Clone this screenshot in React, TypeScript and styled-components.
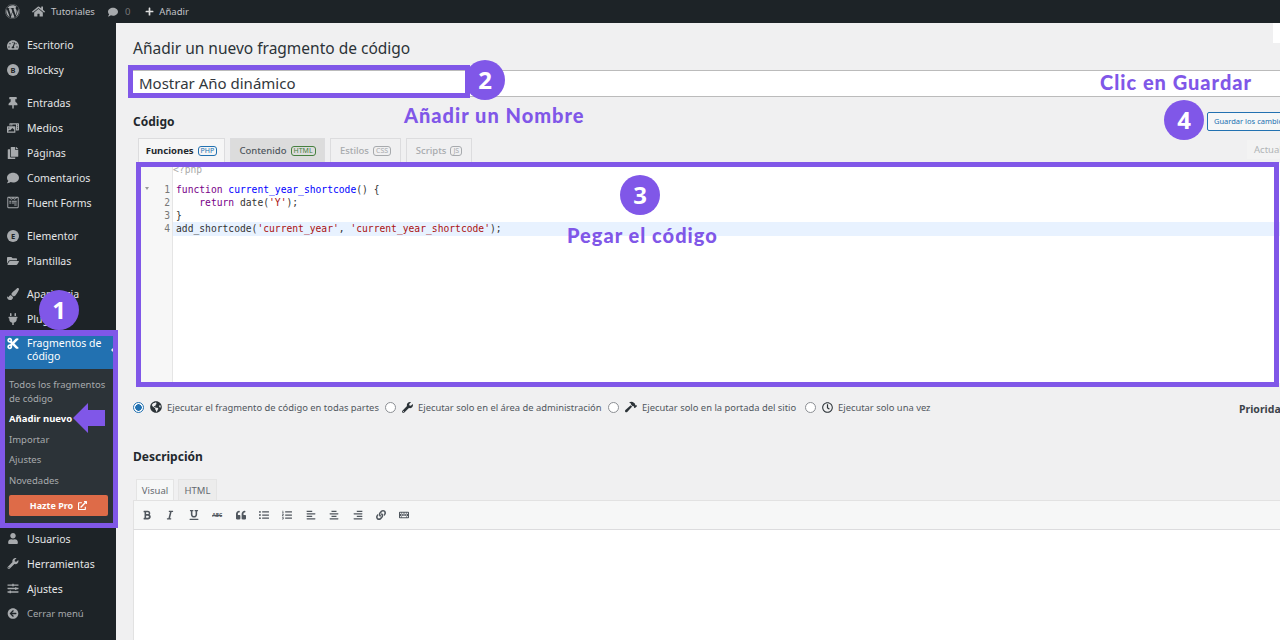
import styled, { createGlobalStyle } from 'styled-components';
import type { ReactNode } from 'react';
import {
  FaWordpress, FaHome, FaComment, FaPlus, FaTachometerAlt, FaThumbtack, FaPhotoVideo, FaCopy,
  FaFolderOpen, FaPaintBrush, FaPlug, FaCut, FaUser, FaWrench, FaSlidersH, FaArrowCircleLeft,
  FaExternalLinkAlt, FaGlobeAmericas, FaBold, FaItalic, FaUnderline, FaQuoteLeft, FaListUl,
  FaListOl, FaAlignLeft, FaAlignCenter, FaAlignRight, FaLink, FaKeyboard, FaHammer, FaRegClock,
  FaWpforms,
} from 'react-icons/fa';

const PURPLE = '#8057e8';
const UI_FONT = '"Noto Sans", "Open Sans", sans-serif';

const GlobalStyle = createGlobalStyle`
  html, body { margin: 0; padding: 0; width: 1280px; height: 640px; overflow: hidden; background: #f0f0f1; }
  * { box-sizing: border-box; }
  body { font-family: ${UI_FONT}; color: #3c434a; }
`;

const Page = styled.div`
  position: relative;
  width: 1280px;
  height: 640px;
  overflow: hidden;
  display: flex;
  flex-direction: column;
`;

const AdminBar = styled.div`
  height: 23px;
  flex: none;
  background: #1d2327;
  color: #c3c4c7;
  display: flex;
  align-items: center;
  padding-left: 5px;
  font-size: 9.5px;
`;

const BarItem = styled.div<{ $gap?: number; $left?: number }>`
  display: flex;
  align-items: center;
  gap: ${({ $gap }) => $gap ?? 6}px;
  margin-left: ${({ $left }) => $left ?? 0}px;
  svg { color: #a7aaad; }
`;

const Body = styled.div`
  flex: 1;
  display: flex;
  min-height: 0;
`;

const Sidebar = styled.nav`
  width: 116px;
  flex: none;
  background: #1d2327;
  padding-top: 9px;
`;

const MenuGroup = styled.div`
  margin-bottom: 8px;
`;

const MenuItem = styled.div<{ $small?: boolean }>`
  height: 25px;
  display: flex;
  align-items: center;
  padding-left: 7px;
  gap: 8px;
  color: ${({ $small }) => ($small ? '#a7aaad' : '#e4e5e6')};
  font-size: ${({ $small }) => ($small ? 9.5 : 10.5)}px;
  svg { color: #a7aaad; flex: none; width: 12px; }
`;

const ActiveItem = styled.div`
  height: 38px;
  background: #2271b1;
  color: #fff;
  display: flex;
  gap: 8px;
  padding: 6px 0 0 7px;
  font-size: 10.5px;
  line-height: 13px;
  position: relative;
  svg { flex: none; width: 12px; margin-top: 0; }
`;

const ActiveNotch = styled.span`
  position: absolute;
  right: 0;
  top: 14px;
  border: 5px solid transparent;
  border-right-color: #f0f0f1;
  border-left-width: 0;
`;

const SubMenu = styled.div`
  height: 157px;
  background: #2c3338;
  padding: 9px 9px 0;
  font-size: 9.5px;
  color: #a7aaad;
`;

const SubItem = styled.div<{ $current?: boolean }>`
  line-height: 13.5px;
  margin-bottom: ${({ $current }) => ($current ? 7 : 7)}px;
  color: ${({ $current }) => ($current ? '#fff' : '#a7aaad')};
  font-weight: ${({ $current }) => ($current ? 700 : 400)};
`;

const ProButton = styled.div`
  width: 99px;
  height: 21px;
  margin-top: 8px;
  border-radius: 2px;
  background: #de6b48;
  color: #fff;
  font-size: 9px;
  font-weight: 700;
  display: flex;
  align-items: center;
  justify-content: center;
  gap: 5px;
`;

const Main = styled.main`
  flex: 1;
  min-width: 0;
  padding: 14px 0 0 17px;
  position: relative;
`;

const ScreenOptions = styled.div`
  position: absolute;
  top: 0;
  right: 0;
  width: 7px;
  height: 20px;
  background: #fff;
`;

const Heading = styled.h1`
  margin: 0;
  font-size: 15.5px;
  line-height: 22px;
  font-weight: 400;
  color: #2c3338;
`;

const TitleInput = styled.div`
  height: 27px;
  margin: 11px 0 0 -4px;
  background: #fff;
  border-top: 1px solid #bbb;
  border-bottom: 1px solid #bbb;
  padding-left: 10px;
  font-size: 15px;
  line-height: 25px;
  color: #32373c;
`;

const CodeHeader = styled.div`
  height: 33px;
  display: flex;
  align-items: center;
  justify-content: space-between;
  margin-top: 8px;
`;

const SectionTitle = styled.h2`
  margin: 0;
  font-size: 12px;
  font-weight: 700;
  color: #23282d;
`;

const SaveButton = styled.div`
  width: 100px;
  margin-right: -27px;
  height: 19px;
  flex: none;
  border: 1px solid #2271b1;
  border-radius: 2px;
  background: #f6f7f7;
  color: #2271b1;
  font-size: 7.5px;
  line-height: 17px;
  padding-left: 6px;
  white-space: nowrap;
  overflow: hidden;
`;

const CodeTabs = styled.div`
  display: flex;
  align-items: flex-end;
  height: 24px;
  margin-top: 0;
  padding-left: 5px;
  gap: 5px;
  position: relative;
`;

const CodeTab = styled.div<{ $w: number; $state: 'on' | 'mid' | 'off' }>`
  width: ${({ $w }) => $w}px;
  height: 24px;
  border: 1px solid #dcdcde;
  border-bottom: 0;
  display: flex;
  align-items: center;
  justify-content: center;
  gap: 4px;
  font-size: 9.5px;
  font-weight: ${({ $state }) => ($state === 'on' ? 700 : 500)};
  background: ${({ $state }) => ($state === 'on' ? '#f6f6f6' : $state === 'mid' ? '#dcdcdc' : '#f0f0f1')};
  color: ${({ $state }) => ($state === 'on' ? '#23282d' : $state === 'mid' ? '#50575e' : '#a7aaad')};
`;

const Badge = styled.span<{ $color: string }>`
  font-size: 7px;
  line-height: 8px;
  padding: 0 2px;
  border: 1px solid ${({ $color }) => $color};
  border-radius: 3px;
  color: ${({ $color }) => $color};
  font-weight: 400;
`;

const UpdateTab = styled.div`
  position: absolute;
  right: 0;
  top: 2px;
  width: 33px;
  height: 19px;
  background: #f3f3f3;
  color: #b0b3b6;
  font-size: 9.5px;
  line-height: 19px;
  padding-left: 7px;
  overflow: hidden;
`;

const Editor = styled.div`
  height: 220px;
  margin: 1px 0 0 8px;
  background: #fff;
  display: flex;
  font-family: "DejaVu Sans Mono", monospace;
  font-size: 9.67px;
  line-height: 13.3px;
`;

const Gutter = styled.div`
  width: 32px;
  flex: none;
  background: #f7f7f7;
  border-right: 1px solid #e5e5e5;
  padding-top: 19.5px;
  color: #777;
  position: relative;
`;

const GutterNum = styled.div`
  text-align: right;
  padding-right: 2px;
`;

const FoldMark = styled.span`
  position: absolute;
  left: 4px;
  top: 24px;
  border: 2.5px solid transparent;
  border-top: 3px solid #999;
  border-bottom: 0;
`;

const CodeArea = styled.div`
  flex: 1;
  min-width: 0;
  color: #333;
  white-space: pre;
`;

const PhpTag = styled.div`
  color: #aaa;
  height: 19.5px;
  padding-left: 0;
`;

const CodeLine = styled.div<{ $active?: boolean }>`
  height: 13.3px;
  padding-left: 3px;
  background: ${({ $active }) => ($active ? '#e8f2ff' : 'transparent')};
`;

const Kw = styled.span`color: #708;`;
const Fn = styled.span`color: #00f;`;
const Str = styled.span`color: #a11;`;

const RunRow = styled.div`
  display: flex;
  align-items: center;
  height: 20px;
  margin-top: 14px;
  padding-left: 0;
  font-size: 9.4px;
  color: #50575e;
  position: relative;
`;

const RunOption = styled.div<{ $width: number }>`
  width: ${({ $width }) => $width}px;
  display: flex;
  align-items: center;
  gap: 5px;
  flex: none;
  white-space: nowrap;
  svg { color: #2c3338; flex: none; }
`;

const Radio = styled.span<{ $on?: boolean }>`
  width: 11px;
  height: 11px;
  border-radius: 50%;
  flex: none;
  margin-right: 1px;
  border: 1px solid ${({ $on }) => ($on ? '#2271b1' : '#8c8f94')};
  background: ${({ $on }) => ($on ? 'radial-gradient(circle, #2271b1 0 3px, #fff 3.5px)' : '#fff')};
`;

const Priority = styled.div`
  position: absolute;
  right: 0;
  top: 5px;
  width: 41px;
  overflow: hidden;
  font-size: 10.5px;
  font-weight: 700;
  color: #3c434a;
`;

const DescTitle = styled(SectionTitle)`
  margin-top: 30px;
  line-height: 20px;
`;

const VisualTabs = styled.div`
  display: flex;
  gap: 4px;
  margin: 12px 0 0 3px;
  height: 21px;
`;

const VisualTab = styled.div<{ $on?: boolean; $w: number }>`
  width: ${({ $w }) => $w}px;
  display: flex;
  align-items: center;
  justify-content: center;
  font-size: 9.5px;
  color: #646970;
  border: 1px solid #e4e4e4;
  border-bottom: 0;
  background: ${({ $on }) => ($on ? '#f6f7f7' : '#ececec')};
`;

const EditorToolbar = styled.div`
  height: 30px;
  background: #f6f7f7;
  border-top: 1px solid #e2e2e2;
  border-left: 1px solid #e2e2e2;
  border-bottom: 1px solid #dcdcde;
  display: flex;
  align-items: center;
  padding-left: 8px;
  gap: 13.4px;
  svg { color: #50575e; width: 10px; height: 10px; flex: none; }
`;

const Strike = styled.span`
  width: 10px;
  font-size: 5px;
  font-weight: 700;
  color: #50575e;
  text-decoration: line-through;
  text-align: center;
`;

const WritingArea = styled.div`
  height: 111px;
  background: #fff;
  border-left: 1px solid #e2e2e2;
  border-bottom: 1px solid #d5d5d5;
`;

const Frame = styled.div<{ $x: number; $y: number; $w: number; $h: number; $t: number }>`
  position: absolute;
  left: ${({ $x }) => $x}px;
  top: ${({ $y }) => $y}px;
  width: ${({ $w }) => $w}px;
  height: ${({ $h }) => $h}px;
  border: 5px solid ${PURPLE};
  border-top-width: ${({ $t }) => $t}px;
  pointer-events: none;
`;

const StepCircle = styled.div<{ $x: number; $y: number }>`
  position: absolute;
  left: ${({ $x }) => $x - 20}px;
  top: ${({ $y }) => $y - 20}px;
  width: 40px;
  height: 40px;
  border-radius: 50%;
  background: ${PURPLE};
  color: #fff;
  font-size: 24px;
  font-weight: 700;
  line-height: 40px;
  text-align: center;
`;

const Note = styled.div<{ $x: number; $y: number; $size: number }>`
  position: absolute;
  left: ${({ $x }) => $x}px;
  top: ${({ $y }) => $y}px;
  color: ${PURPLE};
  font-family: Lato, sans-serif;
  font-weight: 900;
  font-size: ${({ $size }) => $size}px;
  line-height: 24px;
  letter-spacing: 1px;
  white-space: nowrap;
`;

const Arrow = styled.svg`
  position: absolute;
  left: 73px;
  top: 403px;
`;

function Menu({ icon, children, small }: { icon: ReactNode; children: ReactNode; small?: boolean }) {
  return (
    <MenuItem $small={small}>
      {icon}
      <span>{children}</span>
    </MenuItem>
  );
}

function CircleIcon({ letter }: { letter: string }) {
  return (
    <svg width="12" height="12" viewBox="0 0 12 12">
      <circle cx="6" cy="6" r="6" fill="#a7aaad" />
      <text x="6" y="8.6" textAnchor="middle" fontSize="7.5" fontWeight="700" fill="#1d2327" fontFamily="Noto Sans">
        {letter}
      </text>
    </svg>
  );
}

export default function App() {
  return (
    <Page>
      <GlobalStyle />
      <AdminBar>
        <FaWordpress size={15} color="#a7aaad" />
        <BarItem $left={12}><FaHome size={13} /> Tutoriales</BarItem>
        <BarItem $left={13} $gap={7}><FaComment size={10} /> <span style={{ color: '#777' }}>0</span></BarItem>
        <BarItem $left={15} $gap={5}><FaPlus size={9} color="#ddd" /> Añadir</BarItem>
      </AdminBar>
      <Body>
        <Sidebar>
          <MenuGroup>
            <Menu icon={<FaTachometerAlt size={12} />}>Escritorio</Menu>
            <Menu icon={<CircleIcon letter="B" />}>Blocksy</Menu>
          </MenuGroup>
          <MenuGroup>
            <Menu icon={<FaThumbtack size={12} />}>Entradas</Menu>
            <Menu icon={<FaPhotoVideo size={12} />}>Medios</Menu>
            <Menu icon={<FaCopy size={12} />}>Páginas</Menu>
            <Menu icon={<FaComment size={12} />}>Comentarios</Menu>
            <Menu icon={<FaWpforms size={13} />}>Fluent Forms</Menu>
          </MenuGroup>
          <MenuGroup>
            <Menu icon={<CircleIcon letter="E" />}>Elementor</Menu>
            <Menu icon={<FaFolderOpen size={12} />}>Plantillas</Menu>
          </MenuGroup>
          <Menu icon={<FaPaintBrush size={12} />}>Apariencia</Menu>
          <Menu icon={<FaPlug size={12} />}>Plugins</Menu>
          <ActiveItem>
            <FaCut size={13} />
            <span>Fragmentos de código</span>
            <ActiveNotch />
          </ActiveItem>
          <SubMenu>
            <SubItem>Todos los fragmentos de código</SubItem>
            <SubItem $current>Añadir nuevo</SubItem>
            <SubItem>Importar</SubItem>
            <SubItem>Ajustes</SubItem>
            <SubItem>Novedades</SubItem>
            <ProButton>Hazte Pro <FaExternalLinkAlt size={9} /></ProButton>
          </SubMenu>
          <Menu icon={<FaUser size={11} />}>Usuarios</Menu>
          <Menu icon={<FaWrench size={11} />}>Herramientas</Menu>
          <Menu icon={<FaSlidersH size={11} />}>Ajustes</Menu>
          <Menu small icon={<FaArrowCircleLeft size={11} />}>Cerrar menú</Menu>
        </Sidebar>
        <Main>
          <ScreenOptions />
          <Heading>Añadir un nuevo fragmento de código</Heading>
          <TitleInput>Mostrar Año dinámico</TitleInput>
          <CodeHeader>
            <SectionTitle>Código</SectionTitle>
            <SaveButton>Guardar los cambios</SaveButton>
          </CodeHeader>
          <CodeTabs>
            <CodeTab $w={87} $state="on">Funciones <Badge $color="#2271b1">PHP</Badge></CodeTab>
            <CodeTab $w={95} $state="mid">Contenido <Badge $color="#46803f">HTML</Badge></CodeTab>
            <CodeTab $w={71} $state="off">Estilos <Badge $color="#a7aaad">CSS</Badge></CodeTab>
            <CodeTab $w={66} $state="off">Scripts <Badge $color="#a7aaad">JS</Badge></CodeTab>
            <UpdateTab>Actualizar</UpdateTab>
          </CodeTabs>
          <Editor>
            <Gutter>
              <FoldMark />
              <GutterNum>1</GutterNum>
              <GutterNum>2</GutterNum>
              <GutterNum>3</GutterNum>
              <GutterNum>4</GutterNum>
            </Gutter>
            <CodeArea>
              <PhpTag>&lt;?php</PhpTag>
              <CodeLine><Kw>function</Kw> <Fn>current_year_shortcode</Fn>() {'{'}</CodeLine>
              <CodeLine>    <Kw>return</Kw> date(<Str>'Y'</Str>);</CodeLine>
              <CodeLine>{'}'}</CodeLine>
              <CodeLine $active>add_shortcode(<Str>'current_year'</Str>, <Str>'current_year_shortcode'</Str>);</CodeLine>
            </CodeArea>
          </Editor>
          <RunRow>
            <RunOption $width={252}><Radio $on /><FaGlobeAmericas size={12} />Ejecutar el fragmento de código en todas partes</RunOption>
            <RunOption $width={223}><Radio /><FaWrench size={11} />Ejecutar solo en el área de administración</RunOption>
            <RunOption $width={197}><Radio /><FaHammer size={12} />Ejecutar solo en la portada del sitio</RunOption>
            <RunOption $width={130}><Radio /><FaRegClock size={11} />Ejecutar solo una vez</RunOption>
            <Priority>Prioridad</Priority>
          </RunRow>
          <DescTitle>Descripción</DescTitle>
          <VisualTabs>
            <VisualTab $on $w={38}>Visual</VisualTab>
            <VisualTab $w={39}>HTML</VisualTab>
          </VisualTabs>
          <EditorToolbar>
            <FaBold />
            <FaItalic />
            <FaUnderline />
            <Strike>ABC</Strike>
            <FaQuoteLeft />
            <FaListUl />
            <FaListOl />
            <FaAlignLeft />
            <FaAlignCenter />
            <FaAlignRight />
            <FaLink />
            <FaKeyboard />
          </EditorToolbar>
          <WritingArea />
        </Main>
      </Body>

      <Frame $x={0} $y={330} $w={118} $h={198} $t={6} />
      <Frame $x={128} $y={65} $w={342} $h={33} $t={5} />
      <Frame $x={136} $y={162} $w={1143} $h={225} $t={5} />
      <StepCircle $x={59} $y={310}>1</StepCircle>
      <StepCircle $x={485} $y={80}>2</StepCircle>
      <StepCircle $x={640} $y={195}>3</StepCircle>
      <StepCircle $x={1184} $y={120}>4</StepCircle>
      <Note $x={404} $y={103} $size={20}>Añadir un Nombre</Note>
      <Note $x={1100} $y={70} $size={20}>Clic en Guardar</Note>
      <Note $x={567} $y={223} $size={20}>Pegar el código</Note>
      <Arrow width="32" height="30" viewBox="0 0 32 30">
        <path d="M0 15 L15 0 V7 H32 V23 H15 V30 Z" fill={PURPLE} />
      </Arrow>
    </Page>
  );
}
